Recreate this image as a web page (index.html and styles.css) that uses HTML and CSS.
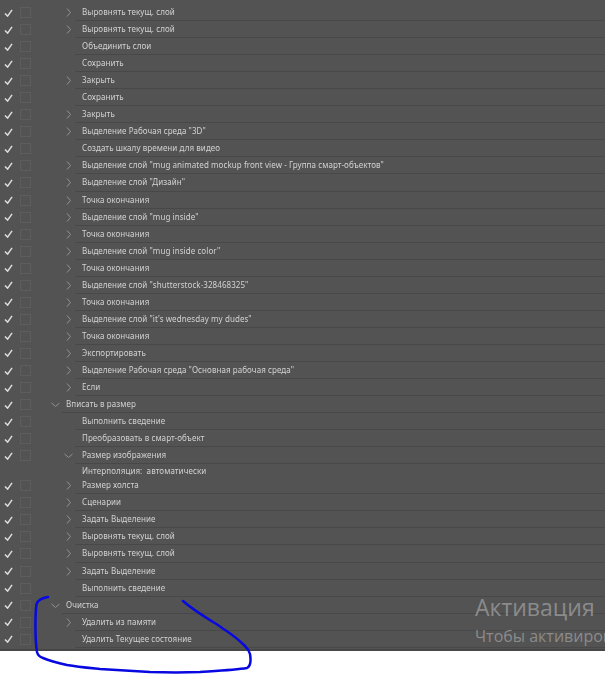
FILE: index.html
```html
<!DOCTYPE html>
<html lang="ru">
<head>
<meta charset="utf-8">
<title>Операции</title>
<link rel="stylesheet" href="styles.css">
</head>
<body>
<div class="panel">
  <div class="list" id="list"></div>
  <div class="watermark">
    <div class="wm-title">Активация</div>
    <div class="wm-sub">Чтобы активировать</div>
  </div>
</div>
<svg class="scribble" viewBox="0 0 605 674" aria-hidden="true">
  <path d="M48 597C42 598 38 600 36.500 604C35 615 35 640 37 652C38 656 40 657 43 658C50 661 58 663 67 665C78 667 90 668 100 669C115 670 132 671 150 672C167 672.500 185 672.500 200 672C215 671 235 670 247 668C251 666 251 660 250 654C249 650 247 648 245 646C240 641 230 633 222 628C218 625 215 623 213 622C205 617 192 609 183 601"/>
</svg>
<script src="app.js"></script>
</body>
</html>
```
FILE: styles.css
```css
* { box-sizing: border-box; }
html, body { margin: 0; padding: 0; background: #fff; }
body { width: 605px; height: 674px; overflow: hidden; font-family: "Noto Sans", "Liberation Sans", sans-serif; }
.panel { position: relative; height: 651px; background: #535353; border-bottom: 2px solid #474747; overflow: hidden; padding-top: 4px; }
.list { display: flex; flex-direction: column; filter: blur(.3px); }
.row { display: flex; align-items: center; height: 17.05px; }
.row.param { height: 13px; }
.check { width: 16px; flex: none; display: flex; justify-content: center; }
.check svg { width: 9px; height: 8px; fill: none; stroke: #dcdcdc; stroke-width: 1.7; }
.box-col { width: 20px; flex: none; }
.box { display: block; width: 11px; height: 11px; margin-left: 4px; border: 1px solid #5d5d5d; }
.twirl { height: 100%; width: 13px; flex: none; display: flex; align-items: center; justify-content: center; }
.twirl svg { width: 9px; height: 9px; fill: none; stroke: #929292; stroke-width: 1; }
.level-2 .twirl { margin-left: 26px; }
.level-1 .twirl { margin-left: 13px; }
.body { flex: 1; height: 100%; display: flex; align-items: center; border-bottom: 1px solid #484848; }
.level-2 .body { padding-left: 7px; }
.level-1 .body { padding-left: 4px; }
.label { font-size: 8px; line-height: 12px; color: #d2d2d2; white-space: pre; letter-spacing: .07px; }
.param .body { border-bottom: 0; }
.watermark { position: absolute; left: 475px; top: 592px; color: #8b8b8b; white-space: nowrap; }
.wm-title { font-family: "Open Sans", "Noto Sans", sans-serif; font-size: 23px; line-height: 30px; }
.wm-sub { font-family: "Open Sans", "Noto Sans", sans-serif; font-size: 16px; line-height: 29px; }
.scribble { position: absolute; left: 0; top: 0; width: 605px; height: 674px; fill: none; stroke: #0808e0; stroke-width: 2.500; stroke-linecap: round; pointer-events: none; }
```
FILE: app.js
```js
const rows = [
  [2,">","Выровнять текущ. слой"],[2,">","Выровнять текущ. слой"],[2,"","Объединить слои"],[2,"","Сохранить"],
  [2,">","Закрыть"],[2,"","Сохранить"],[2,">","Закрыть"],[2,">","Выделение Рабочая среда \"3D\""],
  [2,"","Создать шкалу времени для видео"],[2,">","Выделение слой \"mug animated mockup front view - Группа смарт-объектов\""],
  [2,">","Выделение слой \"Дизайн\""],[2,">","Точка окончания"],[2,">","Выделение слой \"mug inside\""],[2,">","Точка окончания"],
  [2,">","Выделение слой \"mug inside color\""],[2,">","Точка окончания"],[2,">","Выделение слой \"shutterstock-328468325\""],
  [2,">","Точка окончания"],[2,">","Выделение слой \"it's wednesday my dudes\""],[2,">","Точка окончания"],[2,">","Экспортировать"],
  [2,">","Выделение Рабочая среда \"Основная рабочая среда\""],[2,">","Если"],[1,"v","Вписать в размер"],
  [2,"","Выполнить сведение"],[2,"","Преобразовать в смарт-объект"],[2,"v","Размер изображения"],
  ["p","","Интерполяция:  автоматически"],[2,">","Размер холста"],[2,">","Сценарии"],[2,">","Задать Выделение"],
  [2,">","Выровнять текущ. слой"],[2,">","Выровнять текущ. слой"],[2,">","Задать Выделение"],[2,"","Выполнить сведение"],
  [1,"v","Очистка"],[2,">","Удалить из памяти"],[2,"","Удалить Текущее состояние"]
];
const check = '<svg viewBox="0 0 10 9"><path d="M1 5l3 3 5-7"/></svg>';
const right = '<svg viewBox="0 0 9 9"><path d="M3 .5l3.500 4-3.500 4"/></svg>';
const down = '<svg viewBox="0 0 9 9"><path d="M.5 3l4 3.500 4-3.500"/></svg>';
const list = document.getElementById("list");
list.innerHTML = rows.map(([lvl, tw, text]) => {
  const isParam = lvl === "p";
  const icon = tw === ">" ? right : tw === "v" ? down : "";
  const cls = isParam ? "param level-2" : `level-${lvl}`;
  return `<div class="row ${cls}">
    <span class="check">${isParam ? "" : check}</span>
    <span class="box-col">${isParam ? "" : '<span class="box"></span>'}</span>
    <span class="twirl">${icon}</span>
    <div class="body"><span class="label">${text}</span></div>
  </div>`;
}).join("");
```
